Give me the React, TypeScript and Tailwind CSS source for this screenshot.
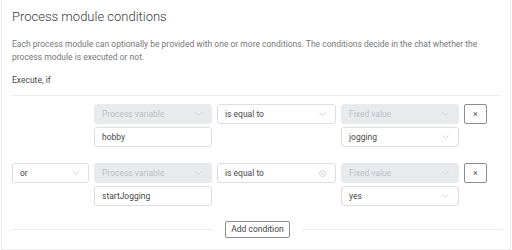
import React from "react";

const Chevron = () => (
  <svg width="7" height="4" viewBox="0 0 7 4" className="shrink-0" fill="none">
    <path d="M0.5 0.5 L3.5 3.5 L6.5 0.5" stroke="#c9cbcf" strokeWidth="0.8" />
  </svg>
);

const ClearIcon = () => (
  <svg width="7" height="7" viewBox="0 0 7 7" className="shrink-0" fill="none">
    <circle cx="3.5" cy="3.5" r="3" stroke="#c2c4c8" strokeWidth="0.7" />
    <path d="M2.3 2.3 L4.7 4.7 M4.7 2.3 L2.3 4.7" stroke="#c2c4c8" strokeWidth="0.7" />
  </svg>
);

function Field({
  text,
  disabled,
  chevron,
  clear,
  w = "w-[118px]",
}: {
  text: string;
  disabled?: boolean;
  chevron?: boolean;
  clear?: boolean;
  w?: string;
}) {
  return (
    <div
      className={`${w} h-[20px] flex items-center justify-between rounded-[3px] border pl-[7px] pr-[9px] ${
        disabled ? "bg-[#e9eaed] border-[#e9eaed] text-[#bcbfc4]" : "bg-white border-[#dedede] text-[#4a4a4a]"
      }`}
    >
      <span className="text-[8.5px] leading-none">{text}</span>
      {chevron && <Chevron />}
      {clear && <ClearIcon />}
    </div>
  );
}

const XButton = () => (
  <div className="w-[23px] h-[20px] flex items-center justify-center rounded-[2px] border border-[#8d8d8d] text-[#555] text-[9px] leading-none">
    ×
  </div>
);

export default function App() {
  return (
    <div className="w-[512px] h-[250px] bg-white" style={{ fontFamily: "Roboto, 'Liberation Sans', sans-serif" }}>
      <div className="ml-[1px] w-[510px] h-[250px] border-x border-b border-[#ececec] pl-[10px] pr-[8px]">
        <div className="pt-[9px] text-[13px] leading-[16px] font-light text-[#3a3a3a]">Process module conditions</div>
        <div className="mt-[13px] text-[8.5px] leading-[13px] text-[#777]">
          Each process module can optionally be provided with one or more conditions. The conditions decide in the chat whether the
          process module is executed or not.
        </div>
        <div className="mt-[10px] text-[8.5px] leading-[13px] text-[#4a4a4a]">Execute, if</div>
        <div className="mt-[8px] h-px bg-[#ececec] w-[490px] -ml-[1px]" />

        <div className="mt-[8px] flex gap-[5px]">
          <div className="w-[77px]" />
          <div className="flex flex-col gap-[3px]">
            <Field text="Process variable" disabled chevron />
            <Field text="hobby" />
          </div>
          <div className="flex flex-col gap-[3px]">
            <Field text="is equal to" chevron w="w-[119px]" />
          </div>
          <div className="flex flex-col gap-[3px]">
            <Field text="Fixed value" disabled chevron />
            <Field text="jogging" chevron />
          </div>
          <XButton />
        </div>

        <div className="mt-[16px] flex gap-[5px]">
          <Field text="or" chevron w="w-[77px]" />
          <div className="flex flex-col gap-[3px]">
            <Field text="Process variable" disabled chevron />
            <Field text="startJogging" />
          </div>
          <div className="flex flex-col gap-[3px]">
            <Field text="is equal to" clear w="w-[119px]" />
          </div>
          <div className="flex flex-col gap-[3px]">
            <Field text="Fixed value" disabled chevron />
            <Field text="yes" chevron />
          </div>
          <XButton />
        </div>

        <div className="mt-[15px] flex items-center w-[490px]">
          <div className="flex-1 h-px bg-[#ececec]" />
          <div className="mx-[12px] w-[65px] h-[17px] flex items-center justify-center rounded-[2px] border border-[#8d8d8d] text-[8.5px] leading-none text-[#444]">
            Add condition
          </div>
          <div className="w-[200px] h-px bg-[#ececec]" />
        </div>
      </div>
    </div>
  );
}
